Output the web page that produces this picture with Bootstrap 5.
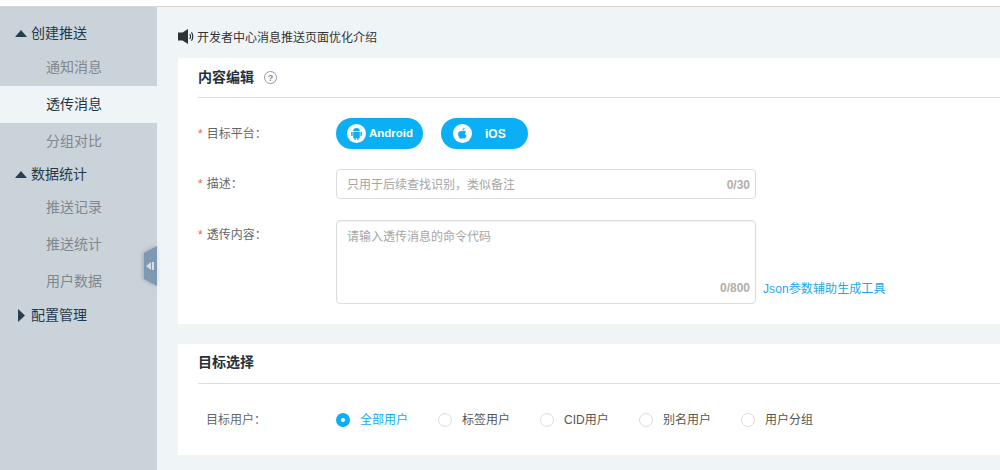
<!DOCTYPE html>
<html lang="zh">
<head>
<meta charset="utf-8">
<title>透传消息</title>
<link href="https://cdn.jsdelivr.net/npm/bootstrap@5.3.0/dist/css/bootstrap.min.css" rel="stylesheet">
<style>
html,body{height:470px;overflow:hidden}
body{font-family:"Liberation Sans","Noto Sans CJK SC",sans-serif;font-size:12px;color:#555;background:#fff}
.topgap{height:7px;background:#fff;border-bottom:1px solid #d8d6d2}
.shell{height:463px}
.sidebar{width:157px;background:#cbd3da;position:relative;flex:none}
.group-t{padding-left:15px;font-size:14px;color:#1f3a4d;gap:4px}
.group-a{margin-top:8px;height:34px;padding-top:3px}
.group-b{height:29px}
.group-c{height:30px}
.sub{height:37px;line-height:37px;padding-left:46px;font-size:14px;color:#80878d}
.sub.on{background:#eff4f7;color:#233544}
.tri-up{width:12px;height:7px;flex:none}
.tri-right{width:12px;height:13px;flex:none}
.collapser{position:absolute;right:0;top:239px;width:13px;height:40px;filter:drop-shadow(-1px 0 2px rgba(60,70,80,.3))}
.mainpane{background:#eff4f7;padding:0 0 0 21px;min-width:0}
.notice{height:51px;padding-top:22px;gap:3px;color:#333;font-size:12px}
.panel{background:#fff;padding:0 0 0 20px}
.p-one{height:266px;margin-bottom:20px}
.p-two{height:111px}
.panel-h{height:40px;border-bottom:1px solid #dedede;font-size:14px;font-weight:700;color:#23303a;gap:10px}
.p-two .panel-h{padding-bottom:2px}
.form-l{width:138px;flex:none;color:#666;font-size:12px}
.req{color:#f0623e;margin-right:4px}
.pill{height:31px;width:87px;border-radius:16px;background:#0bafF5;color:#fff;font-size:11.500px;font-weight:700;border:0;padding:0 0 0 11px;gap:3px;line-height:1}
.pill-ios{padding-left:12px;gap:13px;font-size:12px}
.pills{gap:18px}
.circ{width:19px;height:19px;flex:none}
.fieldbox{width:420px;border:1px solid #dcdcdc;border-radius:4px;position:relative;color:#a5a5a5;font-size:12px;padding-left:10px}
.fb-s{height:30px;line-height:30px}
.fb-s .cnt{line-height:26px}
.fb-l{height:84px;line-height:15px;padding-top:9px;box-shadow:inset 0 1px 2px rgba(0,0,0,.06)}
.fb-l .cnt{line-height:29px}
.cnt{position:absolute;right:5px;bottom:0;color:#b3aea7;font-weight:700}
.jsonlink{color:#1aa9ec;text-decoration:none;margin-left:7px;letter-spacing:.1px;padding-bottom:6px}
.label-top{padding-top:6px}
.radio-dot{width:14px;height:14px;border-radius:50%;border:1px solid #dcdcdc;flex:none;background:#fff}
.radio-dot.on{border:5px solid #0bafF5}
.radio-i{gap:10px;color:#555;font-size:12px;width:102px}
.radio-i.on{color:#0bafF5}
.radio-cid{width:99px}
.row-a{margin-top:20px;height:31px}
.row-b{margin-top:20px;height:30px}
.row-c{margin-top:21px;height:84px}
.row-d{margin-top:29px;height:14px}
.row-d .form-l{padding-left:8px}
</style>
</head>
<body>
<div class="topgap"></div>
<div class="shell d-flex">
  <nav class="sidebar">
    <div class="group-t group-a d-flex align-items-center"><svg class="tri-up" viewBox="0 0 12 7"><path d="M6 0 12 7H0z" fill="#263f50"/></svg>创建推送</div>
    <div class="sub">通知消息</div>
    <div class="sub on">透传消息</div>
    <div class="sub">分组对比</div>
    <div class="group-t group-b d-flex align-items-center"><svg class="tri-up" viewBox="0 0 12 7"><path d="M6 0 12 7H0z" fill="#263f50"/></svg>数据统计</div>
    <div class="sub">推送记录</div>
    <div class="sub">推送统计</div>
    <div class="sub">用户数据</div>
    <div class="group-t group-c d-flex align-items-center"><svg class="tri-right" viewBox="0 0 12 13"><path d="M3 0 10 6.500 3 13z" fill="#263f50"/></svg>配置管理</div>
    <svg class="collapser" viewBox="0 0 13 40"><path d="M13 0V40L0 33V7z" fill="#7e99b2"/><path d="M7 16v8l-5-4z" fill="#d5dde4"/><rect x="8" y="16" width="2" height="8" fill="#d5dde4"/></svg>
  </nav>
  <main class="mainpane flex-grow-1">
    <div class="notice d-flex align-items-start">
      <svg width="16" height="15" viewBox="0 0 16 15"><path d="M0 3.500h4.500L10 0v15l-5.500-3.500H0z" fill="#2c3338"/><path d="M11.800 5q1.500 2.500 0 5M13.500 3.300q2.600 4.200 0 8.400" fill="none" stroke="#2c3338" stroke-width="1.200"/></svg>
      <span>开发者中心消息推送页面优化介绍</span>
    </div>
    <section class="panel p-one">
      <div class="panel-h d-flex align-items-center">内容编辑
        <svg width="13" height="13" viewBox="0 0 13 13"><circle cx="6.500" cy="6.500" r="6" fill="none" stroke="#999"/><text x="6.500" y="10" text-anchor="middle" font-size="9" fill="#888" font-family="Liberation Sans">?</text></svg>
      </div>
      <div class="row-a d-flex align-items-center">
        <div class="form-l"><span class="req">*</span>目标平台：</div>
        <div class="d-flex pills">
          <button class="pill d-flex align-items-center" type="button">
            <svg class="circ" viewBox="0 0 19 19"><circle cx="9.500" cy="9.500" r="9.500" fill="#fff"/><path d="M6.200 7.800h6.600v5.400a1 1 0 0 1-1 1H7.200a1 1 0 0 1-1-1zM6.200 7.100a3.300 3.100 0 0 1 6.600 0z" fill="#0bafF5"/><rect x="4.200" y="7.800" width="1.400" height="4.400" rx=".7" fill="#0bafF5"/><rect x="13.400" y="7.800" width="1.400" height="4.400" rx=".7" fill="#0bafF5"/><rect x="7.400" y="13.500" width="1.400" height="2.500" rx=".7" fill="#0bafF5"/><rect x="10.200" y="13.500" width="1.400" height="2.500" rx=".7" fill="#0bafF5"/></svg>
            Android</button>
          <button class="pill pill-ios d-flex align-items-center" type="button">
            <svg class="circ" viewBox="0 0 19 19"><circle cx="9.500" cy="9.500" r="9.500" fill="#fff"/><path d="M9.500 7.300c1-.7 2.500-.9 3.700.5-1.600 1-1.300 3.300.4 4-.6 1.500-1.600 3-2.700 2.900-.6 0-.9-.4-1.500-.4s-.9.400-1.500.4c-1.400 0-3-2.900-2.800-5 .2-2.500 2.500-3.300 4.400-2.400zM9.400 6.600c0-1.300.9-2.300 2.200-2.500 0 1.400-.9 2.400-2.200 2.500z" fill="#0bafF5"/></svg>
            iOS</button>
        </div>
      </div>
      <div class="row-b d-flex align-items-center">
        <div class="form-l"><span class="req">*</span>描述：</div>
        <div class="fieldbox fb-s">只用于后续查找识别，类似备注<span class="cnt">0/30</span></div>
      </div>
      <div class="row-c d-flex align-items-start">
        <div class="form-l label-top"><span class="req">*</span>透传内容：</div>
        <div class="fieldbox fb-l">请输入透传消息的命令代码<span class="cnt">0/800</span></div>
        <a class="jsonlink align-self-end" href="#">Json参数辅助生成工具</a>
      </div>
    </section>
    <section class="panel p-two">
      <div class="panel-h d-flex align-items-center">目标选择</div>
      <div class="d-flex align-items-center row-d">
        <div class="form-l">目标用户：</div>
        <div class="radio-i on d-flex align-items-center"><span class="radio-dot on"></span>全部用户</div>
        <div class="radio-i d-flex align-items-center"><span class="radio-dot"></span>标签用户</div>
        <div class="radio-i radio-cid d-flex align-items-center"><span class="radio-dot"></span>CID用户</div>
        <div class="radio-i d-flex align-items-center"><span class="radio-dot"></span>别名用户</div>
        <div class="radio-i d-flex align-items-center"><span class="radio-dot"></span>用户分组</div>
      </div>
    </section>
  </main>
</div>
<script src="https://cdn.jsdelivr.net/npm/bootstrap@5.3.0/dist/js/bootstrap.bundle.min.js"></script>
</body>
</html>
